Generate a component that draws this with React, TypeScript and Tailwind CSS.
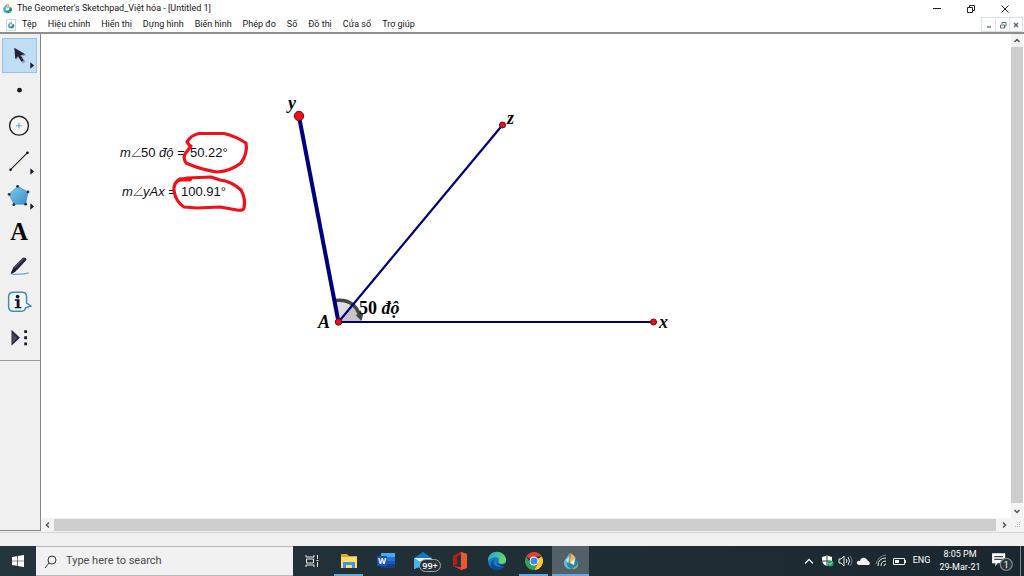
import type { ReactNode } from "react";

const menus = ["Tệp", "Hiệu chỉnh", "Hiển thị", "Dựng hình", "Biến hình", "Phép đo", "Số", "Đồ thị", "Cửa sổ", "Trợ giúp"];

function Logo({ className }: { className: string }) {
  return (
    <svg viewBox="0 0 20 20" className={className} aria-hidden="true">
      <path d="M9 1c-2 4-7 6-7 11 0 4 3 7 7 7-2-3-3-5-2-8 1-4 4-6 2-10z" fill="#49b5cf" />
      <path d="M10 1c3 2 4 4 3 7l-3 4c-2-3 1-6 0-11z" fill="#e5a83e" />
      <path d="M6 12c3 4 7 2 8-5 5 2 6 7 2 10-4 3-9 2-10-5z" fill="#287f9f" />
      <path d="M9 10l4-2-1 6z" fill="#f4f2d2" />
      <path d="M13 15c2 0 4-1 5-4 0 4-2 7-6 8z" fill="#69b35c" />
    </svg>
  );
}

function Flyout() {
  return <path d="M29 24.500v7l4-3.500z" fill="#1b1830" />;
}

const tools: { name: string; icon: ReactNode }[] = [
  {
    name: "Selection arrow",
    icon: (
      <>
        <path d="M13 10l1 12 3-3 4 7 3-2-4-6 5-1z" fill="#9aa8bd" />
        <path d="M12 9l1 12 3-3 3.500 6 2.500-1.500-3.500-5.500 5-1z" fill="#28223c" />
        <Flyout />
      </>
    ),
  },
  { name: "Point", icon: <circle cx="17.500" cy="17" r="2.500" fill="#1b1b28" /> },
  {
    name: "Compass",
    icon: (
      <>
        <circle cx="17" cy="16.500" r="10" fill="#f4f4f4" stroke="#222" strokeWidth="1.500" />
        <path d="M14 16.500h6M17 13.500v6" stroke="#51a0ce" />
      </>
    ),
  },
  {
    name: "Straightedge",
    icon: (
      <>
        <path d="M8 26L26 8" stroke="#222" strokeWidth="1.200" />
        <circle cx="8" cy="26" r="1.300" /><circle cx="26" cy="8" r="1.300" />
        <Flyout />
      </>
    ),
  },
  {
    name: "Polygon",
    icon: (
      <>
        <defs><linearGradient id="polygonFill" x2="1" y2="1"><stop stopColor="#82caef" /><stop offset="1" stopColor="#368fc9" /></linearGradient></defs>
        <path d="M15.500 6.500L26.500 12.500 24 25.500H11.500L6.500 15z" fill="url(#polygonFill)" stroke="#418bb9" strokeWidth=".7" />
        {[[15.5, 6.5], [26.5, 12.5], [24, 25.5], [11.5, 26], [6.5, 15]].map(([x, y]) => <circle key={x} cx={x} cy={y} r="1.500" fill="#18334e" />)}
        <Flyout />
      </>
    ),
  },
  {
    name: "Text",
    icon: <text x="17" y="25" textAnchor="middle" className="font-['Liberation_Serif',serif] text-[26px] font-bold" fill="#080808">A</text>,
  },
  {
    name: "Marker",
    icon: (
      <>
        <path d="M8 24l3-7L21 7q3-1 4 2L15 20z" fill="#252437" />
        <path d="M12 18L22 8" stroke="#77768b" />
        <path d="M8 25l4-6 2 2z" fill="#111" />
        <path d="M10 25c8-2 9 1 17-2" fill="none" stroke="#62a6cc" strokeWidth="1.300" />
      </>
    ),
  },
  {
    name: "Information",
    icon: (
      <>
        <path d="M11 6.500h9q5 0 5 5V18l4.500 3-5.500 2q-1 3.500-4 3.500h-9q-5 0-5-5v-10q0-5 5-5z" fill="#f5fafc" stroke="#448cbc" strokeWidth="1.600" />
        <circle cx="15.500" cy="11" r="2" fill="#181727" />
        <path d="M12.500 14h5v8h2v1.500h-7V22h2v-6.500h-2z" fill="#181727" />
      </>
    ),
  },
  {
    name: "Custom tools",
    icon: (
      <>
        <path d="M9 8v17l9-8.500z" fill="#29263e" />
        <path d="M10 11v11l5-5z" fill="#4a485b" />
        <path d="M22.500 8.500h3v3h-3zM22.500 15h3v3h-3zM22.500 21.500h3v3h-3z" fill="#1d1a2a" />
      </>
    ),
  },
];

function Sketch() {
  return (
    <svg className="absolute inset-0 h-full w-full" role="img" aria-label="Góc yAx và tia Az">
      <g transform="translate(-41 -34)">
        <path d="M338.500 322L334.500 301Q345 298 354 304z" fill="#dedede" />
        <path d="M338.500 322L354 304Q361 311 361 321z" fill="#c5c5c5" />
        <path d="M335 300.500Q354 298 360 316" fill="none" stroke="#454545" strokeWidth="3.500" />
        <path d="M355.500 315l8-2-2 8z" fill="#454545" />
        <g stroke="#00007e" fill="none">
          <path d="M299 116.500L338.500 322" strokeWidth="4" />
          <path d="M338.500 322L502.500 125" strokeWidth="2.200" />
          <path d="M338.500 322H653.500" strokeWidth="2.200" />
        </g>
        <g fill="#ef0f16" stroke="#5b1015">
          <circle cx="299" cy="116" r="4.700" /><circle cx="502.500" cy="125" r="3" />
          <circle cx="338.500" cy="322" r="3.200" /><circle cx="653.500" cy="322" r="3" />
        </g>
        <g className="font-['Liberation_Serif','Times_New_Roman',serif] text-[18px] font-bold italic" fill="#050505">
          <text x="288" y="109">y</text>
          <text x="507" y="124">z</text>
          <text x="318" y="328">A</text>
          <text x="659" y="328">x</text>
          <text x="359" y="314"><tspan className="not-italic">50</tspan> độ</text>
        </g>
        <g className="font-['Liberation_Sans',Arial,sans-serif] text-[13px]" fill="#101010">
          <text x="120" y="157" className="italic">m</text>
          <path d="M140 148l-8 8.500h9" fill="none" stroke="#444" strokeWidth=".8" />
          <text x="141" y="157">50 <tspan className="italic">độ</tspan> =</text>
          <text x="190" y="157">50.22°</text>
          <text x="122" y="196" className="italic">m</text>
          <path d="M142 187l-8 8.500h9" fill="none" stroke="#444" strokeWidth=".8" />
          <text x="143" y="196"><tspan className="italic">yAx</tspan> =</text>
          <text x="181" y="196">100.91°</text>
        </g>
        <g fill="none" stroke="#f01018" strokeWidth="3.200" strokeLinecap="round" strokeLinejoin="round">
          <path d="M190 146L187 142Q191 135 199 133.500L224 133.500Q235 136 246 143Q248 153 241 163Q231 171 217 172Q202 170 186 163Q183 158 185 154L191 146" />
          <path d="M190 179L180 179Q173 183 174 191Q176 202 184 207L197 208L220 207L237 210Q243 211 244 208Q246 199 241 190Q231 181 220 180L211 177L187 178L180 180" />
          <path d="M181 179.500h9" strokeWidth="4" />
        </g>
      </g>
    </svg>
  );
}

function TaskIcon({ label, active, underline, children }: { label: string; active?: boolean; underline?: boolean; children: ReactNode }) {
  return (
    <button aria-label={label} className={`relative flex h-full w-[37px] items-center justify-center ${active ? "bg-[#536067]" : ""}`}>
      <svg viewBox="0 0 28 24" className="h-6 w-7 overflow-visible">{children}</svg>
      {underline && <span className={`absolute bottom-0 h-0.5 bg-[#66a9dc] ${active ? "inset-x-0" : "inset-x-1"}`} />}
    </button>
  );
}

function Taskbar() {
  return (
    <footer className="flex h-[30px] shrink-0 bg-linear-to-r from-[#25353d] to-[#1b272e] text-white">
      <button aria-label="Start" className="flex w-9 items-center justify-center">
        <svg viewBox="0 0 12 12" className="h-3 w-3" fill="white"><path d="M0 2l5-.8v4.500H0zM5.700 1L12 0v5.700H5.700zM0 6.300h5v4.500L0 10zM5.700 6.300H12V12l-6.300-1z" /></svg>
      </button>
      <label className="flex w-[257px] items-center gap-2 border-y border-[#b7babb] bg-[#f1f1f1] pt-px pl-2 text-[#414141]">
        <svg viewBox="0 0 14 14" className="h-3.5 w-3.5" fill="none" stroke="#333"><circle cx="8" cy="5" r="4" /><path d="M5 8L1 13" /></svg>
        <input aria-label="Type here to search" placeholder="Type here to search" className="min-w-0 flex-1 bg-transparent text-[11px] outline-none placeholder:text-[#494949]" />
      </label>
      <nav aria-label="Taskbar" className="flex">
        <TaskIcon label="Task view">
          <path d="M8 6v2h8V6M8 18v-2h8v2M8.500 10h7v4h-7zM19.500 6v4M19.500 13v5M18.500 11.500h2" fill="none" stroke="#ececec" />
        </TaskIcon>
        <TaskIcon label="File Explorer" underline>
          <path d="M6 5h6l2 2h8v12H6z" fill="#dba62d" /><path d="M6 8h16v11H6z" fill="#ffdc70" />
          <path d="M8 19v-6h12v6h-3v-3h-6v3z" fill="#4196d8" />
        </TaskIcon>
        <TaskIcon label="Word">
          <path d="M9 4h14v15H9z" fill="#2375cf" /><path d="M9 4h14v4H9z" fill="#49aaf0" /><path d="M9 12h14v3H9z" fill="#185abd" /><path d="M9 15h14v4H9z" fill="#143d8b" />
          <path d="M5 7h10v10H5z" fill="#1956b4" /><text x="10" y="15" textAnchor="middle" className="font-['Open_Sans',sans-serif] text-[8px] font-bold" fill="white">W</text>
        </TaskIcon>
        <TaskIcon label="Mail, 99+ unread">
          <path d="M5 9l9-6 9 6v10H5z" fill="#107abd" /><path d="M5 9h18l-9 6z" fill="#e8f4fb" /><path d="M5 9l9 6-8 5H5z" fill="#41b7ed" />
          <rect x="10.500" y="10.500" width="21" height="12" rx="6" fill="#29363c" stroke="#9ea5a8" />
          <text x="21" y="19.500" textAnchor="middle" className="font-['Open_Sans',sans-serif] text-[9px] font-semibold" fill="white">99+</text>
        </TaskIcon>
        <TaskIcon label="Office">
          <path d="M7 7l8-4 6 2v14l-6 2-8-4 8 1V6l-4 1v8l-4 2z" fill="#dd361a" /><path d="M15 3l6 2v14l-6 2z" fill="#ef5630" /><path d="M7 7l8-4v3l-4 1v8l-4 2z" fill="#b41f12" />
          <path d="M11 7l4-1v12l-4-.5z" fill="#25343c" />
        </TaskIcon>
        <TaskIcon label="Microsoft Edge">
          <defs><linearGradient id="edgeWave" x2="1" y2=".5"><stop stopColor="#259bdd" /><stop offset="1" stopColor="#69d867" /></linearGradient></defs>
          <circle cx="14" cy="12" r="9" fill="#147dca" />
          <path d="M5 12C5 -1 23 1 23 11c0 5-9 5-7 0 0-4-7-4-11 1z" fill="url(#edgeWave)" />
          <path d="M12 10c-4 4 0 10 9 7-5 8-15 3-13-3 1-3 3-4 4-4z" fill="#0a4b9b" />
          <path d="M14 10c-2 3 0 7 8 5 2-1 2 1 1 2-6 1-12-2-9-7z" fill="#24343c" />
        </TaskIcon>
        <TaskIcon label="Chrome" underline>
          <path d="M14 12L6.200 7.500A9 9 0 0 1 21.800 7.500H14z" fill="#e34236" />
          <path d="M14 12L21.800 7.500A9 9 0 0 1 14 21l4-7z" fill="#fbc82e" />
          <path d="M14 21A9 9 0 0 1 6.200 7.500L10.500 14l7 .5z" fill="#35a154" />
          <circle cx="14" cy="12" r="4.500" fill="white" /><circle cx="14" cy="12" r="3.500" fill="#4188ed" />
        </TaskIcon>
        <TaskIcon label="The Geometer's Sketchpad" active underline>
          <path d="M12 4c0 4-5 5-5 10 0 4 3 6 7 6-4-4 1-9-2-16z" fill="#65bdca" />
          <path d="M13 4c4 2 7 5 6 9l-5 2c-3-4 1-6-1-11z" fill="#e3ba5c" />
          <path d="M10 11c1 5 5 5 8-2 5 4 4 8 0 10-5 2-9-1-8-8z" fill="#2786aa" />
          <path d="M13 14l5-5-1 7z" fill="#f5efd0" />
          <path d="M14 19c3 0 6-2 7-5 1 4-2 6-5 6z" fill="#7eb767" />
          <path d="M9 11l3-3-1 6z" fill="#dcefdc" />
        </TaskIcon>
      </nav>
      <div className="ml-auto flex h-full items-center">
        <button aria-label="Notification area" className="flex h-full items-center">
          <svg viewBox="0 0 110 30" className="h-[30px] w-[110px]" fill="none" stroke="#e9eeee">
            <path d="M6 17.500l4-4 4 4" strokeWidth="1.300" />
            <path d="M23 11l5-1.500 5 1.500v4q-1 4-5 5-4-1-5-5z" fill="white" stroke="none" />
            <path d="M28 10v10M23 15h8" stroke="#314047" /><circle cx="31.500" cy="17.500" r="3" fill="#25a35a" stroke="none" /><path d="M30 17.500l1 1 2-2" />
            <path d="M40 13h2l3-3v10l-3-3h-2z" /><path d="M47 13q2 2 0 4M49 11q3 4 0 8" /><path d="M51 10q4 5 0 10" stroke="#798489" />
            <path d="M60 19q-3-1-2-3 1-2 3-1 1-4 5-3 2 1 3 3 3 1 1 4z" fill="#f2f4f4" stroke="none" />
            <path d="M79 20q0-8 8-8M82 20q0-5 5-5M85 20q0-2 2-2" /><path d="M77 18q2-8 10-9" stroke="#7c878c" />
            <path d="M94.500 12.500h11v6h-11zM106.500 14v3" /><path d="M96 14h4v3h-4z" fill="white" stroke="none" />
          </svg>
        </button>
        <button className="w-[25px] text-center text-[9px]">ENG</button>
        <button className="w-[52px] text-center text-[9px] leading-[13px]">8:05 PM<br />29-Mar-21</button>
        <button aria-label="1 notification" className="flex h-full w-[35px] items-center justify-center border-r border-[#7f898d]">
          <svg viewBox="0 0 22 22" className="h-6 w-6">
            <path d="M1 4h12v9H6l-2 3v-3H1z" fill="white" /><path d="M3 7h8M3 9.500h8" stroke="#39454a" />
            <circle cx="14" cy="14" r="5.500" fill="#2c383e" stroke="#899297" /><text x="14" y="17" textAnchor="middle" className="text-[8px]" fill="white">1</text>
          </svg>
        </button>
        <span className="w-[3px]" />
      </div>
    </footer>
  );
}

export default function App() {
  return (
    <div className="flex h-screen flex-col overflow-hidden bg-white font-[Roboto,'Noto_Sans',sans-serif] text-[#161616]">
      <header className="shrink-0 border-b-2 border-[#8e8e8e]">
        <div className="flex h-[17px] items-center">
          <Logo className="ml-0.5 h-[11px] w-[11px]" />
          <h1 className="ml-1 text-[9px] whitespace-nowrap">The Geometer's Sketchpad_Việt hóa - [Untitled 1]</h1>
          <div className="ml-auto flex h-full">
            <button aria-label="Minimize" className="flex w-[34px] items-center justify-center"><svg viewBox="0 0 10 10" className="h-2.5 w-2.5" stroke="#222"><path d="M1 4.500h8" /></svg></button>
            <button aria-label="Restore" className="flex w-[34px] items-center justify-center"><svg viewBox="0 0 10 10" className="h-2.5 w-2.5" fill="none" stroke="#222"><path d="M1.500 3.500h5v5h-5zM3.500 3.500v-2h5v5h-2" /></svg></button>
            <button aria-label="Close" className="flex w-[34px] items-center justify-center"><svg viewBox="0 0 10 10" className="h-2.5 w-2.5" stroke="#222"><path d="M1.500 1.500l7 7m0-7l-7 7" /></svg></button>
            <span className="w-0.5" />
          </div>
        </div>
        <div className="flex h-[15px] items-center">
          <div className="ml-1.5 flex h-3 w-2.5 items-center justify-center border border-[#d3d6d6]"><Logo className="h-2 w-2" /></div>
          <nav aria-label="Menu" className="ml-1.5 flex gap-[11px] text-[9px] whitespace-nowrap">
            {menus.map((item) => <button key={item}>{item}</button>)}
          </nav>
          <div className="mr-px ml-auto flex h-full divide-x divide-[#dce1e5] border border-[#dce1e5] text-[#55687a]">
            <button aria-label="Minimize document" className="flex w-3.5 items-center justify-center"><svg viewBox="0 0 8 8" className="h-2 w-2" stroke="currentColor"><path d="M2 6h4" strokeWidth="1.300" /></svg></button>
            <button aria-label="Restore document" className="flex w-3.5 items-center justify-center"><svg viewBox="0 0 8 8" className="h-2 w-2" fill="none" stroke="currentColor"><path d="M1.500 4h4v3h-4zM3 3V1.500h4V5H6" /></svg></button>
            <button aria-label="Close document" className="flex w-3 items-center justify-center"><svg viewBox="0 0 8 8" className="h-2 w-2" stroke="currentColor" strokeWidth="1.500"><path d="M2 2l4 4m0-4L2 6" /></svg></button>
          </div>
        </div>
      </header>

      <main className="flex min-h-0 flex-1">
        <aside className="w-[41px] shrink-0 border-r border-b border-[#858585] bg-[#f0f0f0]">
          <div className="border-b border-[#9a9a9a] pt-1 pb-1">
            <div className="grid h-[318px] grid-rows-9 pl-0.5">
              {tools.map((tool, index) => (
                <button key={tool.name} aria-label={tool.name} aria-pressed={index === 0} className={`w-[35px] border ${index === 0 ? "border-[#8fc5ed] bg-[#bfddf5]" : "border-transparent"}`}>
                  <svg viewBox="0 0 35 35" className="h-full w-full">{tool.icon}</svg>
                </button>
              ))}
            </div>
          </div>
        </aside>
        <div className="flex min-w-0 flex-1 flex-col">
          <div className="flex min-h-0 flex-1">
            <section className="relative min-w-0 flex-1 overflow-hidden"><Sketch /></section>
            <div className="mr-px flex w-3 shrink-0 flex-col bg-[#f3f3f3]">
              <button aria-label="Scroll up" className="flex h-[13px] items-center justify-center"><svg viewBox="0 0 8 8" className="h-2 w-2" fill="none" stroke="#555" strokeWidth="1.500"><path d="M1.500 5L4 2.500 6.500 5" /></svg></button>
              <div className="flex-1 bg-[#cdcdcd]" />
              <button aria-label="Scroll down" className="flex h-[15px] items-center justify-center"><svg viewBox="0 0 8 8" className="h-2 w-2" fill="none" stroke="#555" strokeWidth="1.500"><path d="M1.500 3L4 5.500 6.500 3" /></svg></button>
            </div>
          </div>
          <div className="flex h-[13px] shrink-0 bg-[#f3f3f3] pt-px">
            <button aria-label="Scroll left" className="flex w-[13px] items-center justify-center"><svg viewBox="0 0 8 8" className="h-2 w-2" fill="none" stroke="#555" strokeWidth="1.500"><path d="M5 1.500L2.500 4 5 6.500" /></svg></button>
            <div className="flex-1 bg-[#cdcdcd]" />
            <button aria-label="Scroll right" className="flex w-[15px] items-center justify-center"><svg viewBox="0 0 8 8" className="h-2 w-2" fill="none" stroke="#555" strokeWidth="1.500"><path d="M3 1.500L5.500 4 3 6.500" /></svg></button>
            <svg viewBox="0 0 13 12" className="h-3 w-[13px]" fill="#b4b4b4"><path d="M8 3h1v1H8zM6 5h1v1H6zM8 5h1v1H8zM4 7h1v1H4zM6 7h1v1H6zM8 7h1v1H8z" /></svg>
          </div>
        </div>
      </main>
      <div className="flex h-[15px] shrink-0 flex-col bg-[#f0f0f0]"><div className="mt-px h-px bg-[#d7d7d7]" /></div>
      <Taskbar />
    </div>
  );
}
